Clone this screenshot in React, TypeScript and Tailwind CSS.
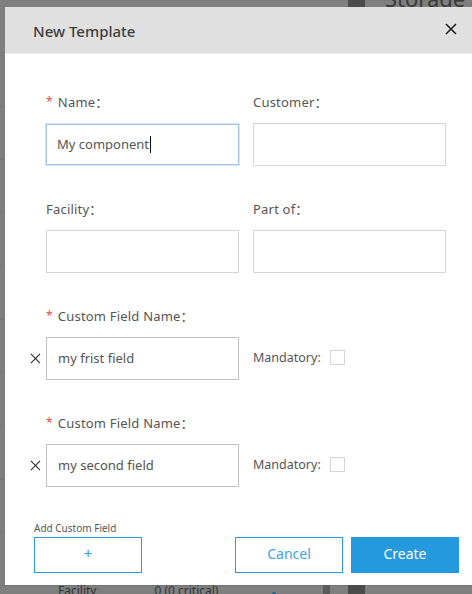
import React from 'react';

const font = { fontFamily: '"Noto Sans", "Open Sans", "Noto Sans CJK SC", sans-serif' };

function Cross({ size = 12, stroke = 1.4, className = '' }: { size?: number; stroke?: number; className?: string }) {
  return (
    <svg width={size} height={size} viewBox="0 0 12 12" className={className} fill="none">
      <path d="M1 1L11 11M11 1L1 11" stroke="currentColor" strokeWidth={stroke} />
    </svg>
  );
}

function FieldLabel({ text, required }: { text: string; required?: boolean }) {
  return (
    <div className="h-5 flex items-center text-[13px] text-[#555] mb-[10px] whitespace-nowrap tracking-[0.2px]">
      {required && <span className="text-[#f04848] text-[12px] mr-[5px] -mt-[3px]">*</span>}
      <span>{text}</span>
    </div>
  );
}

function Box({ value, focused, dark }: { value?: string; focused?: boolean; dark?: boolean }) {
  if (focused) {
    return (
      <div className="h-[43px] w-[195px] -ml-[1px] border border-[#d3e6f8] bg-white">
        <div className="h-full w-full border border-[#a6c3e2] flex items-center px-[10px] text-[13px] text-[#555]">
          <span>{value}</span>
          <span className="inline-block w-px h-[17px] bg-[#111] ml-px" />
        </div>
      </div>
    );
  }
  return (
    <div
      className={`h-[43px] w-[193px] border ${dark ? 'border-[#c2c2c2]' : 'border-[#d6d6d6]'} flex items-center px-[11px] text-[13px] text-[#555] bg-white`}
    >
      {value}
    </div>
  );
}

function CustomField({ value }: { value: string }) {
  return (
    <div className="mb-[34px]">
      <FieldLabel text="Custom Field Name：" required />
      <div className="flex items-center -ml-[17px]">
        <div className="w-[17px] flex items-center justify-start pl-[1px] text-[#333]">
          <Cross size={11} stroke={1.3} />
        </div>
        <Box value={value} dark />
        <div className="ml-[14px] flex items-center text-[12.5px] text-[#555]">
          <span className="w-[77px]">Mandatory:</span>
          <span className="w-[15px] h-[15px] border border-[#d6d6d6] bg-white -mt-[2px]" />
        </div>
      </div>
    </div>
  );
}

export default function App() {
  const bgRows = Array.from({ length: 11 });
  return (
    <div className="relative w-[472px] h-[594px] overflow-hidden bg-[#7f7f7f]" style={font}>
      {/* page behind the overlay */}
      <div className="flex flex-col">
        {bgRows.map((_, i) => (
          <div key={i} className="h-[53.3px] border-b border-[#767676] shrink-0" />
        ))}
      </div>
      <div className="absolute left-[348px] top-0 w-[17px] h-[8px] bg-[#4b4b4b]" />
      <div className="absolute left-[385px] -top-[18px] text-[22px] text-[#3a3a3a] whitespace-nowrap">Storage and</div>
      <div className="absolute left-[323px] top-[585px] w-[7px] h-[9px] bg-[#5a5a5a]" />
      <div className="absolute left-[348px] top-[585px] w-[17px] h-[9px] bg-[#4b4b4b]" />
      <div className="absolute left-0 top-[582px] w-[300px] flex items-center text-[12px] text-[#333] whitespace-nowrap">
        <span className="ml-[58px]">Facility</span>
        <span className="ml-[58px]">0 (0 critical)</span>
        <span className="ml-[54px] w-[4px] h-[4px] rounded-full bg-[#1f5f88] mt-[6px]" />
      </div>

      {/* dialog */}
      <div className="absolute left-[5px] top-[7px] w-[483px] h-[578px] bg-white flex flex-col">
        <div className="h-[47px] bg-[#e0e0e0] border-b border-[#ececec] flex items-center justify-between pl-[28px] pr-[31px] shrink-0">
          <span className="text-[15px] font-medium text-[#3d3d3d] mt-[2px]">New Template</span>
          <Cross size={12} stroke={1.5} className="text-[#1a1a1a] -mt-[3px]" />
        </div>

        <div className="px-[41px] pt-[39px]">
          <div className="grid grid-cols-[193px_193px] gap-x-[14px]">
            <div className="mb-[34px]">
              <FieldLabel text="Name：" required />
              <Box value="My component" focused />
            </div>
            <div className="mb-[34px]">
              <FieldLabel text="Customer：" />
              <Box />
            </div>
            <div className="mb-[34px]">
              <FieldLabel text="Facility：" />
              <Box />
            </div>
            <div className="mb-[34px]">
              <FieldLabel text="Part of：" />
              <Box />
            </div>
          </div>
          <CustomField value="my frist field" />
          <CustomField value="my second field" />
        </div>

        <div className="mt-auto px-[29px] pb-[13px] flex items-end justify-between">
          <div className="flex flex-col">
            <span className="text-[10px] text-[#555] leading-[14px] mb-[2px]">Add Custom Field</span>
            <button className="w-[108px] h-[36px] border border-[#2a9be0] text-[#2a9be0] text-[15px] flex items-center justify-center pb-[3px]">
              +
            </button>
          </div>
          <div className="flex gap-[8px]">
            <button className="w-[108px] h-[36px] border border-[#2a9be0] text-[#3ea3e2] text-[14px] flex items-center justify-center pb-[3px]">
              Cancel
            </button>
            <button className="w-[108px] h-[36px] bg-[#2599dd] text-white text-[14px] flex items-center justify-center pb-[3px]">
              Create
            </button>
          </div>
        </div>
      </div>
    </div>
  );
}
